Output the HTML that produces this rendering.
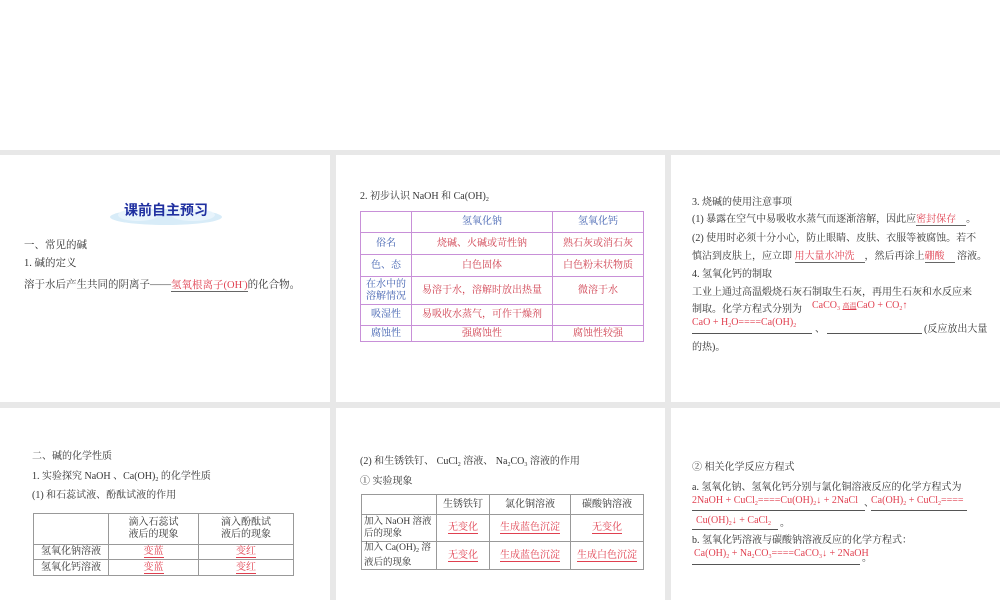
<!DOCTYPE html>
<html><head><meta charset="utf-8"><style>
*{margin:0;padding:0;box-sizing:border-box}
body{width:1000px;height:600px;background:#fff;position:relative;overflow:hidden;font-family:"Liberation Serif","Noto Serif CJK SC",serif;font-size:10px;color:#333}
.g{position:absolute;background:#e8e8e8}
.t{position:absolute;white-space:nowrap;line-height:12px}
.r{color:#e04050}
.u{border-bottom:1px solid #666}
sub{font-size:6px;vertical-align:-2px}
table{position:absolute;border-collapse:collapse;font-size:10px}
td{text-align:center;line-height:12px;padding:0}
.p td{border:1px solid #c890d8;color:#d04050}
.p td.b{color:#4060b0}
.k td{border:1px solid #999}
.nw{white-space:nowrap;text-align:left;padding-left:2px;font-size:9.5px}
</style></head><body>
<div class="g" style="left:0;top:150px;width:1000px;height:5px"></div>
<div class="g" style="left:0;top:402px;width:1000px;height:6px"></div>
<div class="g" style="left:330px;top:150px;width:6px;height:450px"></div>
<div class="g" style="left:665px;top:150px;width:6px;height:450px"></div>

<svg style="position:absolute;left:108px;top:197px" width="116" height="30"><ellipse cx="58" cy="20" rx="56" ry="8" fill="#d8ecf8"/><ellipse cx="30" cy="18" rx="20" ry="6" fill="#e8f4fc"/><ellipse cx="85" cy="18" rx="22" ry="6" fill="#e8f4fc"/></svg>
<div class="t" style="left:124px;top:202px;font-size:14px;line-height:16px;font-weight:bold;color:#2030a0;font-family:'Liberation Sans','Noto Sans CJK SC',sans-serif">课前自主预习</div>
<div class="t" style="left:24px;top:240px;font-size:10.5px">一、常见的碱</div>
<div class="t" style="left:24px;top:258px;font-size:10.5px">1. 碱的定义</div>
<div class="t" style="left:24px;top:276px;font-size:10.5px">溶于水后产生共同的阴离子——<span class="r u">氢氧根离子(OH<sup style="font-size:6px">-</sup>)</span>的化合物。</div>

<div class="t" style="left:360px;top:191px">2. 初步认识 NaOH 和 Ca(OH)<sub>2</sub></div>
<table class="p" style="left:360px;top:211px;width:284px">
<tr style="height:21px"><td style="width:51px"></td><td class="b" style="width:141px">氢氧化钠</td><td class="b">氢氧化钙</td></tr>
<tr style="height:22px"><td class="b">俗名</td><td>烧碱、火碱或苛性钠</td><td>熟石灰或消石灰</td></tr>
<tr style="height:22px"><td class="b">色、态</td><td>白色固体</td><td>白色粉末状物质</td></tr>
<tr style="height:28px"><td class="b">在水中的<br>溶解情况</td><td>易溶于水，溶解时放出热量</td><td>微溶于水</td></tr>
<tr style="height:21px"><td class="b">吸湿性</td><td>易吸收水蒸气，可作干燥剂</td><td></td></tr>
<tr style="height:16px"><td class="b">腐蚀性</td><td>强腐蚀性</td><td>腐蚀性较强</td></tr>
</table>

<div class="t" style="left:692px;top:197px">3. 烧碱的使用注意事项</div>
<div class="t" style="left:692px;top:214px">(1) 暴露在空气中易吸收水蒸气而逐渐溶解，因此应<span class="r u">密封保存　</span>。</div>
<div class="t" style="left:692px;top:233px">(2) 使用时必须十分小心，防止眼睛、皮肤、衣服等被腐蚀。若不</div>
<div class="t" style="left:692px;top:251px">慎沾到皮肤上，应立即 <span class="r u">用大量水冲洗　</span>，然后再涂上<span class="r u">硼酸　</span> 溶液。</div>
<div class="t" style="left:692px;top:269px">4. 氢氧化钙的制取</div>
<div class="t" style="left:692px;top:287px">工业上通过高温煅烧石灰石制取生石灰，再用生石灰和水反应来</div>
<div class="t" style="left:692px;top:304px">制取。化学方程式分别为</div>
<div class="t r" style="left:812px;top:300px">CaCO<sub>3</sub> <span style="font-size:7px;text-decoration:underline">高温</span>CaO + CO<sub>2</sub>↑</div>
<div class="t r" style="left:692px;top:317px">CaO + H<sub>2</sub>O====Ca(OH)<sub>2</sub></div>
<div style="position:absolute;left:692px;top:333px;width:120px;border-top:1px solid #555"></div>
<div class="t" style="left:815px;top:324px">、</div>
<div style="position:absolute;left:827px;top:333px;width:95px;border-top:1px solid #555"></div>
<div class="t" style="left:924px;top:324px">(反应放出大量</div>
<div class="t" style="left:692px;top:342px">的热)。</div>

<div class="t" style="left:32px;top:451px">二、碱的化学性质</div>
<div class="t" style="left:32px;top:471px">1. 实验探究 NaOH 、Ca(OH)<sub>2</sub> 的化学性质</div>
<div class="t" style="left:32px;top:490px">(1) 和石蕊试液、酚酞试液的作用</div>
<table class="k" style="left:33px;top:513px;width:261px">
<tr style="height:31px"><td style="width:75px"></td><td style="width:90px">滴入石蕊试<br>液后的现象</td><td>滴入酚酞试<br>液后的现象</td></tr>
<tr style="height:15px"><td>氢氧化钠溶液</td><td class="r"><span class="u" style="border-color:#e04050">变蓝</span></td><td class="r"><span class="u" style="border-color:#e04050">变红</span></td></tr>
<tr style="height:16px"><td>氢氧化钙溶液</td><td class="r"><span class="u" style="border-color:#e04050">变蓝</span></td><td class="r"><span class="u" style="border-color:#e04050">变红</span></td></tr>
</table>

<div class="t" style="left:360px;top:456px">(2) 和生锈铁钉、 CuCl<sub>2</sub> 溶液、 Na<sub>2</sub>CO<sub>3</sub> 溶液的作用</div>
<div class="t" style="left:360px;top:476px">① 实验现象</div>
<table class="k" style="left:361px;top:494px;width:283px;table-layout:fixed">
<tr style="height:20px"><td style="width:75px"></td><td style="width:53px">生锈铁钉</td><td style="width:81px">氯化铜溶液</td><td>碳酸钠溶液</td></tr>
<tr style="height:27px"><td class="nw">加入 NaOH 溶液<br>后的现象</td><td class="r"><span class="u" style="border-color:#e04050">无变化</span></td><td class="r"><span class="u" style="border-color:#e04050">生成蓝色沉淀</span></td><td class="r"><span class="u" style="border-color:#e04050">无变化</span></td></tr>
<tr style="height:28px"><td class="nw">加入 Ca(OH)<sub>2</sub> 溶<br>液后的现象</td><td class="r"><span class="u" style="border-color:#e04050">无变化</span></td><td class="r"><span class="u" style="border-color:#e04050">生成蓝色沉淀</span></td><td class="r"><span class="u" style="border-color:#e04050">生成白色沉淀</span></td></tr>
</table>

<div class="t" style="left:692px;top:462px">② 相关化学反应方程式</div>
<div class="t" style="left:692px;top:482px">a. 氢氧化钠、氢氧化钙分别与氯化铜溶液反应的化学方程式为</div>
<div class="t r" style="left:692px;top:495px">2NaOH + CuCl<sub>2</sub>====Cu(OH)<sub>2</sub>↓ + 2NaCl</div>
<div style="position:absolute;left:692px;top:510px;width:173px;border-top:1px solid #555"></div>
<div class="t" style="left:864px;top:498px">、</div>
<div class="t r" style="left:871px;top:495px">Ca(OH)<sub>2</sub> + CuCl<sub>2</sub>====</div>
<div style="position:absolute;left:871px;top:510px;width:96px;border-top:1px solid #555"></div>
<div class="t r" style="left:696px;top:515px">Cu(OH)<sub>2</sub>↓ + CaCl<sub>2</sub></div>
<div style="position:absolute;left:692px;top:529px;width:86px;border-top:1px solid #555"></div>
<div class="t" style="left:780px;top:518px">。</div>
<div class="t" style="left:692px;top:535px">b. 氢氧化钙溶液与碳酸钠溶液反应的化学方程式：</div>
<div class="t r" style="left:694px;top:548px">Ca(OH)<sub>2</sub> + Na<sub>2</sub>CO<sub>3</sub>====CaCO<sub>3</sub>↓ + 2NaOH</div>
<div style="position:absolute;left:692px;top:564px;width:168px;border-top:1px solid #555"></div>
<div class="t" style="left:862px;top:553px">。</div>
</body></html>
